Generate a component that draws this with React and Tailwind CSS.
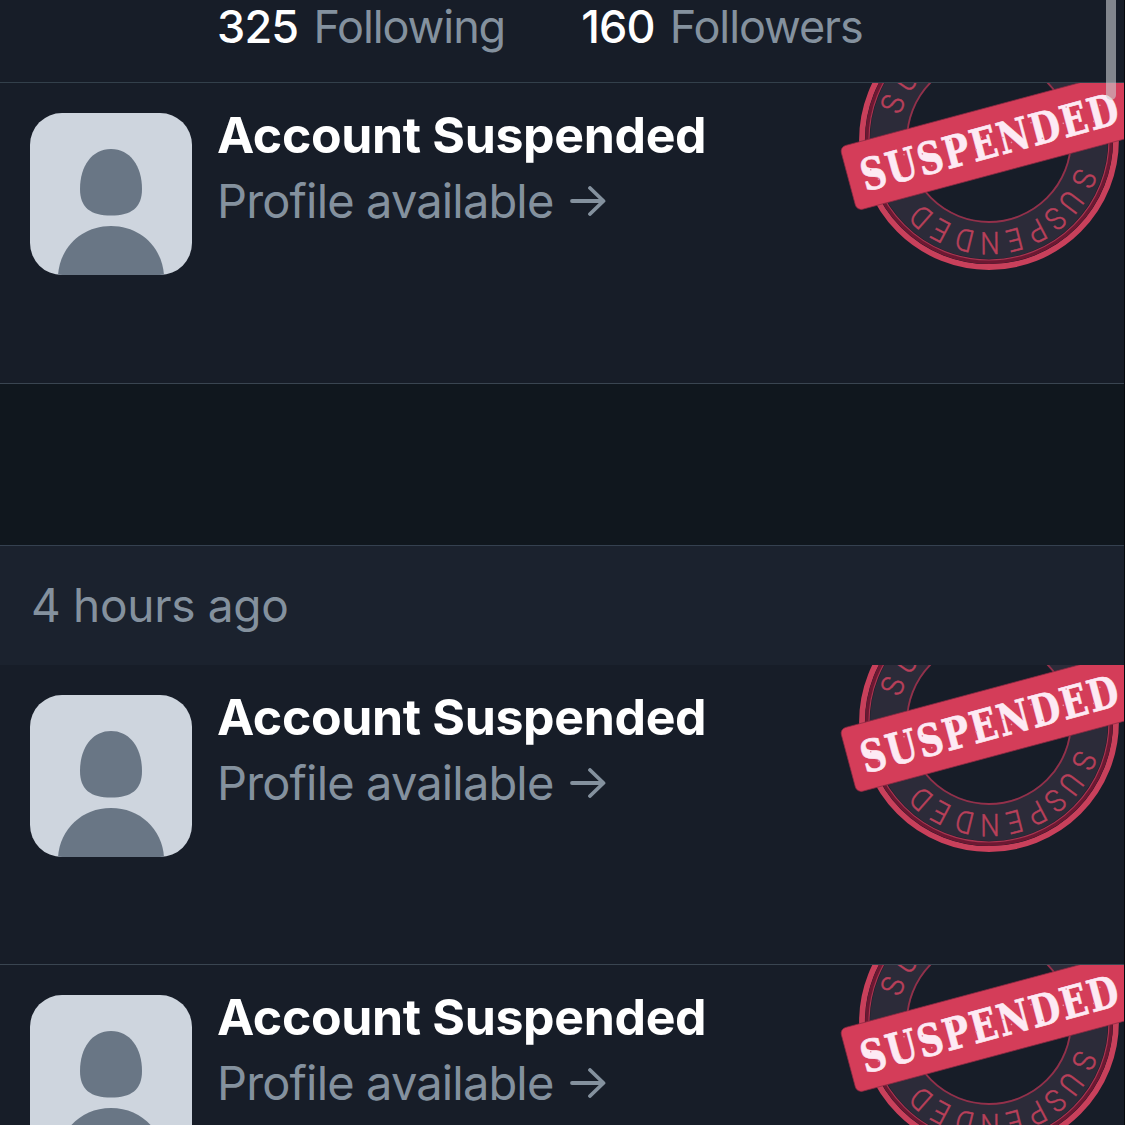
const RING_ANGLES = [22, 37, 49.7, 62.3, 75.5, 89.5, 103.8, 118, 131.5];
const RING_TEXT = "SUSPENDED";

function RingLetters({ offset }) {
  return RING_TEXT.split("").map((letter, i) => (
    <text
      key={i}
      transform={`rotate(${RING_ANGLES[i] + offset + 90}) translate(0 -92) scale(0.88 1)`}
      textAnchor="middle"
      fontFamily="Roboto, sans-serif"
      fontSize="31"
      fontWeight="300"
      fill="#b9405a"
      stroke="#b9405a"
      strokeWidth="0.5"
    >
      {letter}
    </text>
  ));
}

const SPECKS = [
  [24, 30], [29, 41], [52, 44], [60, 24], [78, 28], [84, 42], [108, 22], [131, 38],
  [139, 27], [160, 33], [167, 40], [191, 26], [198, 44], [222, 35], [229, 20], [252, 41], [262, 27],
];

function Stamp() {
  return (
    <svg className="block h-[200px] w-[300px]" viewBox="0 0 300 200" aria-label="Suspended">
      <g transform="translate(164 57)">
        <circle r="100" fill="none" stroke="#2c2b39" strokeWidth="38" />
        <circle r="82" fill="none" stroke="#93304a" strokeWidth="1.8" />
        <circle r="127" fill="none" stroke="#c9405b" strokeWidth="5.8" />
        <circle r="122" fill="none" stroke="#6d1832" strokeWidth="3.8" />
        <circle r="120" fill="none" stroke="#a93450" strokeWidth="1.2" />
        <RingLetters offset={0} />
        <RingLetters offset={178.500} />
      </g>
      <g transform="translate(14.800 64) rotate(-15)">
        <rect width="320" height="66" rx="6" fill="#d43d59" stroke="#8b2a43" strokeWidth="0.7" />
        <text
          x="13"
          y="49.500"
          textLength="267"
          lengthAdjust="spacingAndGlyphs"
          letterSpacing="2"
          fontFamily="'DejaVu Serif', serif"
          fontWeight="700"
          fontSize="44"
          fill="#fdeaf4"
          stroke="#fdeaf4"
          strokeWidth="0.6"
        >
          SUSPENDED
        </text>
        {SPECKS.map(([x, y]) => (
          <circle key={x} cx={x} cy={y} r="0.8" fill="#e58fa6" />
        ))}
      </g>
    </svg>
  );
}

function Avatar() {
  return (
    <svg className="mt-[30px] block size-[162px] shrink-0 rounded-[32px] bg-[#ced5de]" viewBox="0 0 162 162" aria-hidden="true">
      <path d="M81 36C100 36 112 53 112 76C112 95 101 102.500 81 102.500C61 102.500 50 95 50 76C50 53 62 36 81 36Z" fill="#697685" />
      <path d="M28 162C30 134 52 113 81 113C110 113 132 134 134 162Z" fill="#697685" />
    </svg>
  );
}

function Arrow() {
  return (
    <svg className="ml-[17px] h-[30px] w-[36px]" viewBox="0 0 36 30" fill="none" stroke="#84919e" strokeWidth="3.8" strokeLinecap="round" strokeLinejoin="round" aria-hidden="true">
      <path d="M2 15H33M20 2L33.500 15L20 28" />
    </svg>
  );
}

function AccountRow({ className }) {
  return (
    <article className={`relative flex shrink-0 overflow-hidden bg-[#171d28] pl-[30px] ${className}`}>
      <Avatar />
      <div className="ml-[25px] pt-[22px] whitespace-nowrap">
        <h2 className="text-[50px] leading-[60px] font-bold tracking-[-0.35px] text-white">Account Suspended</h2>
        <p className="mt-[6px] flex items-center text-[47px] leading-[60px] text-[#84919e]">
          <span className="tracking-[-0.85px]">Profile available</span>
          <Arrow />
        </p>
      </div>
      <div className="absolute top-0 right-0">
        <Stamp />
      </div>
    </article>
  );
}

function Stat({ value, label }) {
  return (
    <div className="flex gap-[15px]">
      <span className="font-medium tracking-[-0.8px] text-white">{value}</span>
      <span className="tracking-[-1.1px] text-[#84919e]">{label}</span>
    </div>
  );
}

export default function App() {
  return (
    <main className="relative flex h-[1125px] w-[1125px] flex-col overflow-hidden bg-[#171d28] font-['Inter',sans-serif]">
      <header className="flex h-[82px] shrink-0 gap-[76px] pl-[217px] text-[45px] leading-[53px] whitespace-nowrap">
        <Stat value="325" label="Following" />
        <Stat value="160" label="Followers" />
      </header>
      <div className="h-px shrink-0 bg-[#33404b]" />
      <AccountRow className="h-[300px]" />
      <div className="h-px shrink-0 bg-[#3a4551]" />
      <div className="h-[161px] shrink-0 bg-[#10171e]" />
      <div className="h-px shrink-0 bg-[#354150]" />
      <div className="flex h-[119px] shrink-0 items-center bg-[#1b222e] pl-[31px] text-[46px] tracking-[-0.3px] text-[#84919e]">
        4 hours ago
      </div>
      <AccountRow className="h-[299px]" />
      <div className="h-px shrink-0 bg-[#3a4551]" />
      <AccountRow className="h-[300px]" />
      <div className="absolute top-0 right-[9px] h-[100px] w-[10px] rounded-b-[5px] bg-[#c9cdd1]/60" />
      <div className="absolute top-0 right-0 h-full w-px bg-[#06090d]" />
    </main>
  );
}
